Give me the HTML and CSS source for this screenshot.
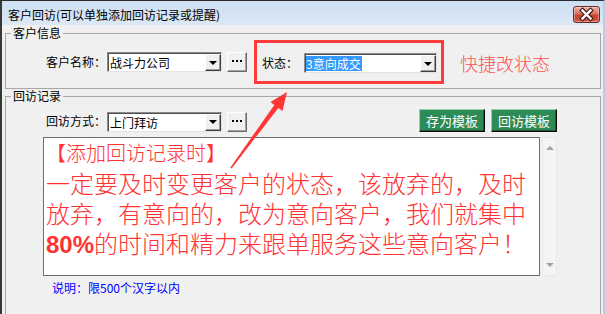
FILE: index.html
```html
<!DOCTYPE html>
<html lang="zh-CN">
<head>
    <meta charset="UTF-8">
    <title>客户回访</title>
    <link rel="stylesheet" href="styles.css">
</head>
<body>
    <div class="window">
        <div class="titlebar">
            <span class="title">客户回访(可以单独添加回访记录或提醒)</span>
            <div class="close">
                <svg width="25" height="15" viewBox="0 0 25 15">
                    <path d="M8.5 3.5 L16.5 11.5 M16.5 3.5 L8.5 11.5" stroke="#4a1a16" stroke-width="4.6" stroke-linecap="square"/>
                    <path d="M8.5 3.5 L16.5 11.5 M16.5 3.5 L8.5 11.5" stroke="#fff" stroke-width="2.4" stroke-linecap="square"/>
                </svg>
            </div>
        </div>

        <!-- 客户信息 -->
        <fieldset class="group group-info">
            <legend>客户信息</legend>
            <div class="row row-info">
                <span class="field-label">客户名称：</span>
                <div class="combo combo-name">
                    <span class="combo-text">战斗力公司</span>
                    <span class="drop"><i></i></span>
                </div>
                <button class="more"><i></i><i></i><i></i></button>
                <div class="highlight">
                    <span class="field-label">状态：</span>
                    <div class="combo combo-status">
                        <span class="combo-text"><span class="selected">3意向成交</span></span>
                        <span class="drop"><i></i></span>
                    </div>
                </div>
                <span class="hint">快捷改状态</span>
            </div>
        </fieldset>

        <!-- 回访记录 -->
        <fieldset class="group group-visit">
            <legend>回访记录</legend>
            <div class="panel">
                <div class="row row-way">
                    <span class="field-label">回访方式：</span>
                    <div class="combo combo-name">
                        <span class="combo-text">上门拜访</span>
                        <span class="drop"><i></i></span>
                    </div>
                    <button class="more"><i></i><i></i><i></i></button>
                    <div class="tpl-buttons">
                        <button class="tpl-btn">存为模板</button>
                        <button class="tpl-btn">回访模板</button>
                    </div>
                </div>
                <div class="memo-wrap">
                    <div class="memo">
                        <div class="memo-head">【添加回访记录时】</div>
                        <div class="memo-body">一定要及时变更客户的状态，该放弃的，及时<br>放弃，有意向的，改为意向客户，我们就集中<br><b>80%</b>的时间和精力来跟单服务这些意向客户！</div>
                    </div>
                    <div class="scrollbar">
                        <span class="arr-up"></span>
                        <span class="arr-down"></span>
                    </div>
                </div>
                <div class="note">说明：限500个汉字以内</div>
            </div>
        </fieldset>

        <svg class="arrow" width="605" height="314" viewBox="0 0 605 314">
            <polygon points="231.6,168.4 278.3,108 282.5,111 287,92 270.5,102 274.3,105 230.4,167.6" fill="#ff3636"/>
        </svg>
    </div>
</body>
</html>
```

FILE: styles.css
```css
body {
    margin: 0;
    background: #f0f0f0;
    font-family: "Noto Sans CJK SC", sans-serif;
    font-size: 12px;
    color: #000;
}
.window {
    position: relative;
    width: 605px;
    height: 314px;
    box-sizing: border-box;
    border-top: 1px solid #2b2b2b;
    border-left: 2px solid #383838;
    border-right: 2px solid #b7cde6;
    background: #f0f0f0;
    overflow: hidden;
}
.titlebar {
    display: flex;
    align-items: center;
    height: 24px;
    padding-left: 6px;
    background: linear-gradient(#cddff2, #dbe8f6);
}
.title {
    flex: 1;
    padding-top: 2px;
}
.close {
    width: 25px;
    height: 15px;
    margin: 2px 3px 0 0;
    border: 1px solid #6d2a24;
    border-radius: 3px;
    background: linear-gradient(#eab3a7, #d9705e 45%, #c8432f 55%, #cf5a45);
    box-shadow: inset 0 0 0 1px rgba(255,255,255,0.35);
}
.close svg { display: block; }

.group {
    margin: 0 2px 0 3px;
    border: 1px solid #a7a7a7;
    padding: 0;
    min-width: 0;
}
.group legend {
    margin-left: 5px;
    padding: 0 2px;
    line-height: 14px;
}
.group-info {
    margin-top: 1px;
    padding-bottom: 4px;
}
.group-visit {
    padding-bottom: 40px;
}
.row {
    display: flex;
    align-items: center;
}
.row-info {
    padding-left: 40px;
}
.field-label {
    line-height: 14px;
}

.combo {
    display: flex;
    align-items: stretch;
    height: 20px;
    box-sizing: border-box;
    background: #fff;
    border: 1px solid;
    border-color: #8a8a8a #e3e3e3 #e3e3e3 #8a8a8a;
    box-shadow: inset 1px 1px 0 #505050;
}
.combo-name {
    width: 115px;
    margin-left: 1px;
}
.combo-status {
    width: 133px;
    margin-left: 6px;
}
.combo-text {
    flex: 1;
    display: flex;
    align-items: center;
    padding: 1px 0 0 2px;
    white-space: nowrap;
}
.selected {
    background: #3399ff;
    color: #fff;
    line-height: 15px;
    padding: 0 1px 0 0;
    margin-left: -1px;
}
.drop {
    width: 16px;
    margin: 1px 0 0;
    box-sizing: border-box;
    display: flex;
    align-items: center;
    justify-content: center;
    background: #f0f0f0;
    border: 1px solid;
    border-color: #fff #404040 #404040 #fff;
    box-shadow: inset -1px -1px 0 #9a9a9a;
}
.drop i {
    width: 0;
    height: 0;
    border-left: 4px solid transparent;
    border-right: 4px solid transparent;
    border-top: 4px solid #000;
}
.more {
    display: flex;
    align-items: center;
    justify-content: center;
    gap: 2px;
    width: 20px;
    height: 20px;
    margin-left: 5px;
    padding: 0 0 2px;
    background: #f0f0f0;
    border: 1px solid;
    border-color: #fff #6a6a6a #6a6a6a #fff;
    box-shadow: inset -1px -1px 0 #a0a0a0;
}
.more i {
    width: 2px;
    height: 2px;
    background: #000;
}
.highlight {
    display: flex;
    align-items: center;
    height: 44px;
    box-sizing: border-box;
    margin-left: 7px;
    padding: 2px 4px 0 5px;
    border: 3px solid #ff3b3b;
}
.hint {
    margin-left: 16px;
    color: #ff5252;
    font-size: 18px;
    font-weight: 300;
    line-height: 22px;
    padding-top: 2px;
}

.panel {
    width: 514px;
    margin-left: 37px;
}
.row-way {
    height: 24px;
    margin: 5px 0 5px;
}
.row-way .field-label {
    margin-left: 3px;
    padding-top: 2px;
}
.row-way .combo,
.row-way .more {
    margin-top: 3px;
}
.tpl-buttons {
    display: flex;
    gap: 6px;
    margin-left: auto;
}
.tpl-btn {
    width: 66px;
    height: 23px;
    padding: 0;
    background: #2e8b57;
    color: #fff;
    font-family: inherit;
    font-size: 13px;
    border: 1px solid;
    border-color: #8fd3aa #0b0b0b #0b0b0b #8fd3aa;
    box-shadow: inset -1px -1px 0 #1e5536;
}

.memo-wrap {
    display: flex;
    height: 139px;
}
.memo {
    width: 497px;
    box-sizing: border-box;
    border: 1px solid #6e6e6e;
    background: #fff;
    padding: 0 0 0 2px;
    color: #ff3333;
    font-weight: 300;
    line-height: 30px;
    white-space: nowrap;
}
.memo-head {
    font-size: 20px;
}
.memo-body {
    font-size: 24px;
}
.memo-body b {
    font-family: "Liberation Sans", sans-serif;
    font-weight: bold;
}
.scrollbar {
    width: 15px;
    margin-left: 2px;
    box-sizing: border-box;
    background: #f4f4f4;
    border: 1px solid #e9e9e9;
    display: flex;
    flex-direction: column;
    justify-content: space-between;
    align-items: center;
    padding: 8px 0;
}
.arr-up {
    border-left: 4px solid transparent;
    border-right: 4px solid transparent;
    border-bottom: 4px solid #a2a2a2;
}
.arr-down {
    border-left: 4px solid transparent;
    border-right: 4px solid transparent;
    border-top: 4px solid #a2a2a2;
}
.note {
    margin: 5px 0 0 9px;
    color: #0000ff;
    line-height: 14px;
}

.arrow {
    position: absolute;
    left: -2px;
    top: -1px;
    pointer-events: none;
}
```
